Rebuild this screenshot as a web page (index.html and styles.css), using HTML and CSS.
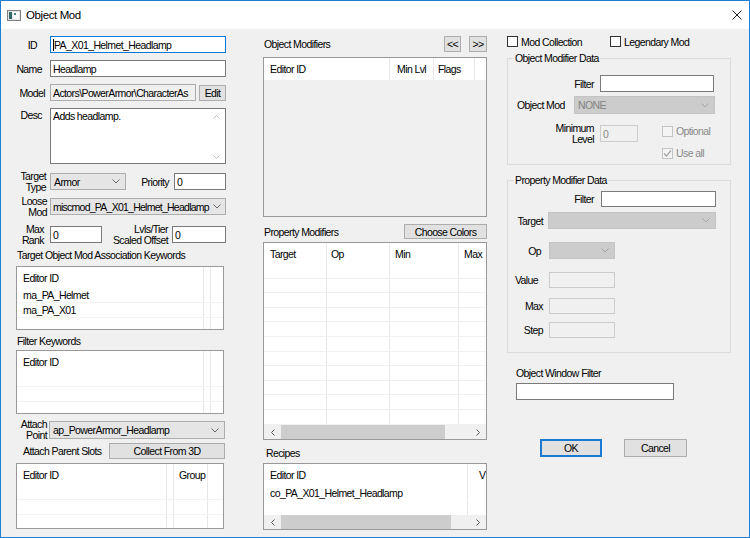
FILE: index.html
```html
<!DOCTYPE html>
<html lang="en">
<head>
    <meta charset="UTF-8">
    <title>Object Mod</title>
    <link rel="stylesheet" href="styles.css">
</head>
<body>
<div class="window">
    <div class="titlebar">
        <svg class="app-icon" width="14" height="11" viewBox="0 0 14 11">
            <rect x="0.5" y="0.5" width="13" height="10" fill="#e6e6e6" stroke="#808080"/>
            <rect x="2" y="2" width="3" height="7" fill="#2f6a6a"/>
            <rect x="6" y="2" width="6" height="7" fill="#fafafa"/>
            <rect x="7" y="3" width="2" height="2" fill="#3a7f80"/>
        </svg>
        <span class="title">Object Mod</span>
        <svg class="close" width="10" height="10" viewBox="0 0 10 10">
            <path d="M0.5 0.5 L9.5 9.5 M9.5 0.5 L0.5 9.5" stroke="#222" stroke-width="1"/>
        </svg>
    </div>

    <div class="client">
        <!-- left column -->
        <div class="col col-left">
            <div class="row r-id">
                <span class="lbl lbl-id">ID</span>
                <div class="edit focused"><span class="caret"></span>PA_X01_Helmet_Headlamp</div>
            </div>
            <div class="row r-name">
                <span class="lbl lbl-name">Name</span>
                <div class="edit">Headlamp</div>
            </div>
            <div class="row r-model">
                <span class="lbl lbl-model">Model</span>
                <div class="edit readonly model-edit">Actors\PowerArmor\CharacterAs</div>
                <div class="btn edit-btn">Edit</div>
            </div>
            <div class="row r-desc">
                <span class="lbl lbl-desc">Desc</span>
                <div class="memo">
                    <div class="memo-text">Adds headlamp.</div>
                    <div class="vscroll">
                        <svg width="7" height="4" viewBox="0 0 7 4"><polyline points="0.5,3.5 3.5,0.5 6.5,3.5" fill="none" stroke="#c2c2c2"/></svg>
                        <svg width="7" height="4" viewBox="0 0 7 4"><polyline points="0.5,0.5 3.5,3.5 6.5,0.5" fill="none" stroke="#c2c2c2"/></svg>
                    </div>
                </div>
            </div>
            <div class="row r-type">
                <span class="lbl lbl2 lbl-type">Target<br>Type</span>
                <div class="combo type-combo">
                    <span class="combo-text">Armor</span>
                    <svg width="8" height="5" viewBox="0 0 8 5"><polyline points="0.5,0.5 4,4 7.5,0.5" fill="none" stroke="#666"/></svg>
                </div>
                <span class="lbl-pri">Priority</span>
                <div class="edit pri-edit">0</div>
            </div>
            <div class="row r-loose">
                <span class="lbl lbl2 lbl-loose">Loose<br>Mod</span>
                <div class="combo loose-combo">
                    <span class="combo-text">miscmod_PA_X01_Helmet_Headlamp</span>
                    <svg width="8" height="5" viewBox="0 0 8 5"><polyline points="0.5,0.5 4,4 7.5,0.5" fill="none" stroke="#666"/></svg>
                </div>
            </div>
            <div class="row r-rank">
                <span class="lbl lbl2 lbl-rank">Max<br>Rank</span>
                <div class="edit rank-edit">0</div>
                <span class="lbl2 lbl-tier">Lvls/Tier<br>Scaled Offset</span>
                <div class="edit tier-edit">0</div>
            </div>

            <div class="caption cap-assoc">Target Object Mod Association Keywords</div>
            <div class="lv lv-left lv-assoc">
                <div class="lv-head">
                    <div class="c kw-c1">Editor ID</div><div class="c kw-c2"></div>
                </div>
                <div class="lv-row"><div class="c kw-c1">ma_PA_Helmet</div><div class="c kw-c2"></div></div>
                <div class="lv-row"><div class="c kw-c1">ma_PA_X01</div><div class="c kw-c2"></div></div>
                <div class="lv-row"><div class="c kw-c1"></div><div class="c kw-c2"></div></div>
                <div class="lv-row"><div class="c kw-c1"></div><div class="c kw-c2"></div></div>
            </div>

            <div class="caption cap-filter">Filter Keywords</div>
            <div class="lv lv-left lv-filter">
                <div class="lv-head">
                    <div class="c kw-c1">Editor ID</div><div class="c kw-c2"></div>
                </div>
                <div class="lv-row"><div class="c kw-c1"></div><div class="c kw-c2"></div></div>
                <div class="lv-row"><div class="c kw-c1"></div><div class="c kw-c2"></div></div>
                <div class="lv-row"><div class="c kw-c1"></div><div class="c kw-c2"></div></div>
            </div>

            <div class="row r-attach">
                <span class="lbl lbl2 lbl-attach">Attach<br>Point</span>
                <div class="combo attach-combo">
                    <span class="combo-text">ap_PowerArmor_Headlamp</span>
                    <svg width="8" height="5" viewBox="0 0 8 5"><polyline points="0.5,0.5 4,4 7.5,0.5" fill="none" stroke="#666"/></svg>
                </div>
            </div>
            <div class="row r-slots">
                <span class="lbl-slots">Attach Parent Slots</span>
                <div class="btn collect-btn">Collect From 3D</div>
            </div>
            <div class="lv lv-left lv-slots">
                <div class="lv-head">
                    <div class="c sl-c1">Editor ID</div><div class="c sl-c2"></div><div class="c sl-c3">Group</div>
                </div>
                <div class="lv-row"><div class="c sl-c1"></div><div class="c sl-c2"></div><div class="c sl-c3"></div></div>
                <div class="lv-row"><div class="c sl-c1"></div><div class="c sl-c2"></div><div class="c sl-c3"></div></div>
                <div class="lv-row"><div class="c sl-c1"></div><div class="c sl-c2"></div><div class="c sl-c3"></div></div>
            </div>
        </div>

        <!-- middle column -->
        <div class="col col-mid">
            <div class="row r-om">
                <span class="caption-inline">Object Modifiers</span>
                <div class="btn nav-btn">&lt;&lt;</div>
                <div class="btn nav-btn nav-next">&gt;&gt;</div>
            </div>
            <div class="lv lv-om">
                <div class="lv-head">
                    <div class="c om-c1">Editor ID</div>
                    <div class="c om-c2">Min Lvl</div>
                    <div class="c om-c3">Flags</div>
                </div>
            </div>

            <div class="row r-pm">
                <span class="caption-inline">Property Modifiers</span>
                <div class="btn colors-btn">Choose Colors</div>
            </div>
            <div class="lv lv-pm">
                <div class="lv-head">
                    <div class="c pm-c1">Target</div>
                    <div class="c pm-c2">Op</div>
                    <div class="c pm-c3">Min</div>
                    <div class="c pm-c4">Max</div>
                </div>
                <div class="lv-body">
                    <div class="lv-row pm-row"><div class="c pm-c1"></div><div class="c pm-c2"></div><div class="c pm-c3"></div><div class="c pm-c4"></div></div>
                    <div class="lv-row pm-row"><div class="c pm-c1"></div><div class="c pm-c2"></div><div class="c pm-c3"></div><div class="c pm-c4"></div></div>
                    <div class="lv-row pm-row"><div class="c pm-c1"></div><div class="c pm-c2"></div><div class="c pm-c3"></div><div class="c pm-c4"></div></div>
                    <div class="lv-row pm-row"><div class="c pm-c1"></div><div class="c pm-c2"></div><div class="c pm-c3"></div><div class="c pm-c4"></div></div>
                    <div class="lv-row pm-row"><div class="c pm-c1"></div><div class="c pm-c2"></div><div class="c pm-c3"></div><div class="c pm-c4"></div></div>
                    <div class="lv-row pm-row"><div class="c pm-c1"></div><div class="c pm-c2"></div><div class="c pm-c3"></div><div class="c pm-c4"></div></div>
                    <div class="lv-row pm-row"><div class="c pm-c1"></div><div class="c pm-c2"></div><div class="c pm-c3"></div><div class="c pm-c4"></div></div>
                    <div class="lv-row pm-row"><div class="c pm-c1"></div><div class="c pm-c2"></div><div class="c pm-c3"></div><div class="c pm-c4"></div></div>
                    <div class="lv-row pm-row"><div class="c pm-c1"></div><div class="c pm-c2"></div><div class="c pm-c3"></div><div class="c pm-c4"></div></div>
                    <div class="lv-row pm-row"><div class="c pm-c1"></div><div class="c pm-c2"></div><div class="c pm-c3"></div><div class="c pm-c4"></div></div>
                    <div class="lv-row pm-row"><div class="c pm-c1"></div><div class="c pm-c2"></div><div class="c pm-c3"></div><div class="c pm-c4"></div></div>
                    <div class="lv-row pm-row"><div class="c pm-c1"></div><div class="c pm-c2"></div><div class="c pm-c3"></div><div class="c pm-c4"></div></div>
                </div>
                <div class="hscroll">
                    <div class="sb-arrow"><svg width="4" height="7" viewBox="0 0 4 7"><polyline points="3.5,0.5 0.5,3.5 3.5,6.5" fill="none" stroke="#555"/></svg></div>
                    <div class="sb-track"><div class="sb-thumb"></div></div>
                    <div class="sb-arrow"><svg width="4" height="7" viewBox="0 0 4 7"><polyline points="0.5,0.5 3.5,3.5 0.5,6.5" fill="none" stroke="#555"/></svg></div>
                </div>
            </div>

            <div class="caption cap-recipes">Recipes</div>
            <div class="lv lv-rc">
                <div class="lv-head">
                    <div class="c rc-c1">Editor ID</div>
                    <div class="c rc-c2">V</div>
                </div>
                <div class="lv-body">
                    <div class="lv-row rc-row"><div class="c rc-c1">co_PA_X01_Helmet_Headlamp</div><div class="c rc-c2"></div></div>
                    <div class="lv-row rc-row"><div class="c rc-c1"></div><div class="c rc-c2"></div></div>
                    <div class="lv-row rc-row"><div class="c rc-c1"></div><div class="c rc-c2"></div></div>
                </div>
                <div class="hscroll">
                    <div class="sb-arrow"><svg width="4" height="7" viewBox="0 0 4 7"><polyline points="3.5,0.5 0.5,3.5 3.5,6.5" fill="none" stroke="#555"/></svg></div>
                    <div class="sb-track"><div class="sb-thumb rc-thumb"></div></div>
                    <div class="sb-arrow"><svg width="4" height="7" viewBox="0 0 4 7"><polyline points="0.5,0.5 3.5,3.5 0.5,6.5" fill="none" stroke="#555"/></svg></div>
                </div>
            </div>
        </div>

        <!-- right column -->
        <div class="col col-right">
            <div class="row r-checks">
                <div class="check-item mod-collection"><span class="chk"></span>Mod Collection</div>
                <div class="check-item"><span class="chk"></span>Legendary Mod</div>
            </div>

            <div class="group group-om">
                <span class="legend">Object Modifier Data</span>
                <div class="row g-filter">
                    <span class="g-lbl">Filter</span>
                    <div class="edit g-filter-edit"></div>
                </div>
                <div class="row g-objmod">
                    <span class="objmod-lbl">Object Mod</span>
                    <div class="combo disabled objmod-combo">
                        <span class="combo-text">NONE</span>
                        <svg width="8" height="5" viewBox="0 0 8 5"><polyline points="0.5,0.5 4,4 7.5,0.5" fill="none" stroke="#a5a5a5"/></svg>
                    </div>
                </div>
                <div class="row g-min">
                    <span class="g-lbl lbl2 min-lbl">Minimum<br>Level</span>
                    <div class="edit disabled min-edit">0</div>
                    <div class="check-item disabled optional"><span class="chk"></span>Optional</div>
                </div>
                <div class="row g-useall">
                    <div class="check-item disabled">
                        <span class="chk">
                            <svg width="9" height="9" viewBox="0 0 9 9"><polyline points="1,4.5 3.5,7 8,1.5" fill="none" stroke="#a5a5a5" stroke-width="1.2"/></svg>
                        </span>Use all
                    </div>
                </div>
            </div>

            <div class="group group-pm">
                <span class="legend">Property Modifier Data</span>
                <div class="row p-filter">
                    <span class="g-lbl">Filter</span>
                    <div class="edit p-filter-edit"></div>
                </div>
                <div class="row p-target">
                    <span class="p-lbl">Target</span>
                    <div class="combo disabled target-combo">
                        <span class="combo-text"></span>
                        <svg width="8" height="5" viewBox="0 0 8 5"><polyline points="0.5,0.5 4,4 7.5,0.5" fill="none" stroke="#a5a5a5"/></svg>
                    </div>
                </div>
                <div class="row p-op">
                    <span class="p-lbl op-lbl">Op</span>
                    <div class="combo disabled small-field">
                        <span class="combo-text"></span>
                        <svg width="8" height="5" viewBox="0 0 8 5"><polyline points="0.5,0.5 4,4 7.5,0.5" fill="none" stroke="#a5a5a5"/></svg>
                    </div>
                </div>
                <div class="row p-value">
                    <span class="p-lbl value-lbl">Value</span>
                    <div class="edit disabled small-field"></div>
                </div>
                <div class="row p-max">
                    <span class="p-lbl">Max</span>
                    <div class="edit disabled small-field"></div>
                </div>
                <div class="row p-step">
                    <span class="p-lbl">Step</span>
                    <div class="edit disabled small-field"></div>
                </div>
            </div>

            <div class="caption cap-owf">Object Window Filter</div>
            <div class="edit owf-edit"></div>

            <div class="row r-buttons">
                <div class="btn ok-btn">OK</div>
                <div class="btn cancel-btn">Cancel</div>
            </div>
        </div>
    </div>
</div>
</body>
</html>
```

FILE: styles.css
```css
body {
    margin: 0;
    font-family: "Liberation Sans", Arial, sans-serif;
    font-size: 10.5px;
    letter-spacing: -0.6px;
    color: #000;
    background: #fff;
}

.window {
    width: 750px;
    height: 538px;
    box-sizing: border-box;
    border: 1px solid #1f80d3;
    background: #f0f0f0;
    display: flex;
    flex-direction: column;
}

/* title bar */
.titlebar {
    height: 28px;
    flex-shrink: 0;
    background: #fff;
    display: flex;
    align-items: center;
}

.app-icon {
    margin-left: 6px;
}

.title {
    flex: 1;
    margin-left: 5px;
    font-size: 11.5px;
    letter-spacing: -0.4px;
}

.close {
    margin-right: 7px;
}

/* columns */
.client {
    flex: 1;
    display: flex;
    align-items: flex-start;
}

.col {
    display: flex;
    flex-direction: column;
    flex-shrink: 0;
}

.col-left {
    width: 210px;
    margin-left: 15px;
}

.col-mid {
    width: 224px;
    margin-left: 37px;
}

.col-right {
    width: 224px;
    margin-left: 20px;
}

.row {
    display: flex;
    align-items: center;
    flex-shrink: 0;
}

/* common controls */
.lbl {
    box-sizing: border-box;
    width: 31px;
    margin-right: 3px;
    text-align: right;
    flex-shrink: 0;
    white-space: nowrap;
}

.lbl2 {
    line-height: 11px;
}

.edit {
    box-sizing: border-box;
    height: 100%;
    border: 1px solid #7a7a7a;
    background: #fff;
    padding-left: 2px;
    display: flex;
    align-items: center;
    white-space: nowrap;
    overflow: hidden;
    flex: 1;
}

.edit.focused {
    border-color: #0078d7;
}

.edit.readonly {
    background: #f0f0f0;
    border-color: #acacac;
}

.edit.disabled {
    background: #f0f0f0;
    border-color: #cccccc;
    color: #8a8a8a;
}

.caret {
    display: inline-block;
    width: 1px;
    height: 12px;
    background: #000;
}

.combo {
    box-sizing: border-box;
    height: 100%;
    border: 1px solid #adadad;
    background: #e5e5e5;
    padding-left: 3px;
    padding-right: 5px;
    display: flex;
    align-items: center;
    flex: 1;
    overflow: hidden;
}

.combo-text {
    flex: 1;
    white-space: nowrap;
    overflow: hidden;
}

.combo.disabled {
    background: #cccccc;
    border-color: #c4c4c4;
    color: #838383;
}

.btn {
    box-sizing: border-box;
    height: 100%;
    border: 1px solid #adadad;
    background: #e1e1e1;
    display: flex;
    align-items: center;
    justify-content: center;
    flex-shrink: 0;
    white-space: nowrap;
}

.caption {
    height: 12px;
    line-height: 12px;
    padding-left: 1px;
    flex-shrink: 0;
    white-space: nowrap;
}

.caption-inline {
    flex: 1;
    padding-left: 1px;
}

/* list views */
.lv {
    box-sizing: border-box;
    border: 1px solid #999;
    background: #fff;
    display: flex;
    flex-direction: column;
    overflow: hidden;
    flex-shrink: 0;
}

.lv-head {
    display: flex;
    height: 21px;
    flex-shrink: 0;
    background: #fff;
}

.lv-row {
    display: flex;
    height: 14px;
    border-bottom: 1px solid #f2f2f2;
    flex-shrink: 0;
}

.lv .c {
    box-sizing: border-box;
    border-right: 1px solid #e8e8e8;
    padding-left: 6px;
    display: flex;
    align-items: center;
    white-space: nowrap;
    overflow: hidden;
    flex-shrink: 0;
}

.lv-body {
    flex: 1;
    overflow: hidden;
}

.hscroll {
    display: flex;
    height: 14px;
    background: #f0f0f0;
    flex-shrink: 0;
}

.sb-arrow {
    width: 17px;
    display: flex;
    align-items: center;
    justify-content: center;
}

.sb-track {
    flex: 1;
}

.sb-thumb {
    width: 164px;
    height: 100%;
    background: #cdcdcd;
}

.rc-thumb {
    width: 170px;
}

/* left column rows */
.r-id,
.r-name,
.r-model {
    margin-top: 7px;
    height: 17px;
}

.r-desc {
    margin-top: 7px;
    height: 56px;
    align-items: flex-start;
}

.r-type {
    margin-top: 9px;
    height: 17px;
}

.r-loose {
    margin-top: 8px;
    height: 17px;
}

.r-rank {
    margin-top: 11px;
    height: 17px;
}

.lbl-id { padding-right: 10px; }
.lbl-name { padding-right: 5px; }
.lbl-desc { padding-right: 5px; padding-top: 1px; }
.lbl-model { padding-right: 2px; }
.lbl-type { padding-right: 1px; }
.lbl-rank { padding-right: 3px; }

.model-edit {
    flex: none;
    width: 146px;
}

.edit-btn {
    width: 27px;
    height: 16px;
    margin-left: 3px;
}

.memo {
    flex: 1;
    height: 100%;
    box-sizing: border-box;
    border: 1px solid #7a7a7a;
    background: #fff;
    display: flex;
}

.memo-text {
    flex: 1;
    padding: 1px 2px;
}

.vscroll {
    width: 17px;
    display: flex;
    flex-direction: column;
    align-items: center;
    justify-content: space-between;
    padding: 6px 0 4px;
}

.type-combo {
    flex: none;
    width: 76px;
}

.loose-combo {
    padding-left: 2px;
    padding-right: 4px;
    letter-spacing: -0.75px;
}

.lbl-pri {
    margin-left: auto;
    margin-right: 5px;
}

.pri-edit {
    flex: none;
    width: 52px;
}

.rank-edit {
    flex: none;
    width: 52px;
}

.lbl-tier {
    flex: 1;
    text-align: right;
    padding-right: 4px;
    white-space: nowrap;
}

.tier-edit {
    flex: none;
    width: 54px;
}

.cap-assoc {
    margin-top: 6px;
}

.lv-left {
    width: 208px;
}

.lv-assoc {
    margin-top: 5px;
    height: 64px;
}

.cap-filter {
    margin-top: 5px;
}

.lv-filter {
    margin-top: 3px;
    height: 64px;
}

.kw-c1 { width: 187px; }
.kw-c2 { width: 3px; }

.r-attach {
    margin-top: 7px;
    height: 18px;
}

.lbl-attach {
    margin-right: 2px;
}

.attach-combo {
    flex: none;
    width: 176px;
}

.r-slots {
    margin-top: 4px;
    height: 16px;
}

.lbl-slots {
    padding-left: 7px;
    white-space: nowrap;
}

.collect-btn {
    width: 116px;
    margin-left: auto;
    margin-right: 1px;
}

.lv-slots {
    margin-top: 4px;
    height: 66px;
}

.sl-c1 { width: 150px; }
.sl-c2 { width: 4px; }
.lv .sl-c3 { width: 34px; padding-left: 5px; }

/* middle column */
.r-om {
    margin-top: 7px;
    height: 16px;
}

.nav-btn {
    width: 17px;
}

.nav-next {
    width: 18px;
    margin-left: 8px;
}

.lv-om {
    margin-top: 5px;
    height: 160px;
    background: #f0f0f0;
}

.lv-om .lv-head {
    height: 22px;
}

.om-c1 { width: 126px; }
.lv .om-c2 { width: 44px; padding-left: 7px; }
.lv .om-c3 { width: 41px; padding-left: 4px; }

.r-pm {
    margin-top: 7px;
    height: 15px;
}

.colors-btn {
    width: 83px;
}

.lv-pm {
    margin-top: 3px;
    height: 198px;
}

.pm-row {
    height: 13.6px;
    border-bottom-color: #f0f0f0;
}

.pm-c1 { width: 63px; }
.lv .pm-c2 { width: 63px; padding-left: 4px; }
.lv .pm-c3 { width: 69px; padding-left: 5px; }
.lv .pm-c4 { width: 40px; padding-left: 5px; border-right: none; }

.cap-recipes {
    margin-top: 7px;
    padding-left: 3px;
}

.lv-rc {
    margin-top: 4px;
    height: 67px;
}

.lv-rc .lv-head {
    height: 22px;
}

.rc-row {
    border-bottom-color: #fff;
}

.rc-c1 { width: 204px; }
.lv .rc-c2 { width: 30px; padding-left: 11px; border-right: none; }

/* right column */
.r-checks {
    margin-top: 7px;
    height: 11px;
}

.check-item {
    display: flex;
    align-items: center;
    white-space: nowrap;
}

.chk {
    box-sizing: border-box;
    width: 11px;
    height: 11px;
    border: 1px solid #333;
    background: #fff;
    margin-right: 3px;
    display: flex;
    align-items: center;
    justify-content: center;
    flex-shrink: 0;
}

.check-item.disabled {
    color: #8a8a8a;
}

.check-item.disabled .chk {
    border-color: #c4c4c4;
    background: #f4f4f4;
}

.mod-collection {
    width: 103px;
}

.group {
    position: relative;
    box-sizing: border-box;
    border: 1px solid #dcdcdc;
    flex-shrink: 0;
}

.legend {
    position: absolute;
    top: -7px;
    left: 6px;
    line-height: 12px;
    padding: 0 1px;
    background: #f0f0f0;
    white-space: nowrap;
}

.group-om {
    margin-top: 11px;
    height: 107px;
}

.g-lbl {
    width: 86px;
    text-align: right;
    flex-shrink: 0;
}

.g-filter {
    margin-top: 16px;
    height: 17px;
}

.g-filter-edit {
    flex: none;
    width: 114px;
    margin-left: 6px;
}

.g-objmod {
    margin-top: 4px;
    height: 18px;
    padding-left: 9px;
}

.objmod-lbl {
    width: 57px;
    flex-shrink: 0;
}

.objmod-combo {
    flex: none;
    width: 141px;
}

.g-min {
    margin-top: 11px;
    height: 17px;
}

.min-lbl {
    line-height: 11px;
}

.min-edit {
    flex: none;
    width: 38px;
    margin-left: 6px;
}

.optional {
    margin-left: 24px;
    align-self: flex-start;
}

.g-useall {
    margin-top: 5px;
    height: 12px;
    padding-left: 154px;
}

.group-pm {
    margin-top: 15px;
    height: 173px;
}

.p-filter {
    margin-top: 10px;
    height: 16px;
}

.p-filter-edit {
    flex: none;
    width: 115px;
    margin-left: 7px;
}

.p-lbl {
    box-sizing: border-box;
    width: 35px;
    text-align: right;
    flex-shrink: 0;
    margin-right: 6px;
}

.p-target {
    margin-top: 5px;
    height: 17px;
}

.target-combo {
    flex: none;
    width: 168px;
    margin-left: -1px;
}

.p-op {
    margin-top: 13px;
    height: 17px;
}

.op-lbl {
    padding-right: 2px;
}

.small-field {
    flex: none;
    width: 66px;
}

.p-value {
    margin-top: 13px;
    height: 16px;
}

.value-lbl {
    padding-right: 5px;
}

.p-max {
    margin-top: 10px;
    height: 16px;
}

.p-step {
    margin-top: 8px;
    height: 16px;
}

.cap-owf {
    margin-top: 14px;
    padding-left: 9px;
}

.owf-edit {
    flex: none;
    margin-top: 4px;
    margin-left: 9px;
    width: 158px;
    height: 17px;
}

.r-buttons {
    margin-top: 39px;
    height: 18px;
}

.ok-btn {
    width: 62px;
    margin-left: 33px;
    border: 2px solid #1979d4;
}

.cancel-btn {
    width: 63px;
    margin-left: 22px;
}
```
